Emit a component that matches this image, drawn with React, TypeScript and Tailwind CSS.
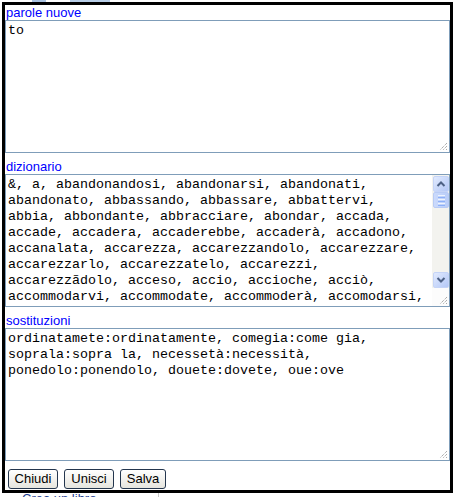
import React from "react";

const mono = { fontFamily: '"Liberation Mono", "Courier New", monospace' };

function Grip() {
  return (
    <svg
      className="absolute right-[1px] bottom-[1px]"
      width="10"
      height="10"
      viewBox="0 0 10 10"
    >
      <path d="M9 2 L2 9 M9 5 L5 9 M9 8 L8 9" stroke="#8a8a8a" strokeWidth="1" strokeDasharray="1 1" />
    </svg>
  );
}

function Label({ children }: { children: React.ReactNode }) {
  return (
    <div className="h-[15px] text-[13px] leading-[15px] text-[#0000ff] pl-[1px]" style={{ fontFamily: '"Liberation Sans", Arial, sans-serif' }}>
      {children}
    </div>
  );
}

function Lines({ lines }: { lines: string[] }) {
  return (
    <div className="text-[13.33px] leading-[16px] text-black whitespace-pre pl-[2px] pt-[2px]" style={mono}>
      {lines.map((l, i) => (
        <div key={i}>{l}</div>
      ))}
    </div>
  );
}

function ArrowBtn({ dir }: { dir: "up" | "down" }) {
  return (
    <div className="h-[16px] w-[16px] rounded-[2px] border border-[#c5d4f7] bg-gradient-to-br from-[#e1eafe] to-[#b4c8f6] flex items-center justify-center">
      <svg width="10" height="8" viewBox="0 0 10 8">
        {dir === "up" ? (
          <path d="M1.5 6 L5 2.5 L8.5 6" stroke="#4d6185" strokeWidth="2" fill="none" />
        ) : (
          <path d="M1.5 2 L5 5.5 L8.5 2" stroke="#4d6185" strokeWidth="2" fill="none" />
        )}
      </svg>
    </div>
  );
}

function Scrollbar() {
  return (
    <div className="w-[17px] flex flex-col bg-[#f3f3ef] pt-[1px] pl-[1px]">
      <ArrowBtn dir="up" />
      <div className="h-[16px] w-[16px] rounded-[2px] border border-[#b8cbf5] bg-gradient-to-r from-[#cbdafc] to-[#b9cdf8] flex flex-col items-center justify-center gap-[1px]">
        <div className="w-[7px] h-[1px] bg-[#eef4fe]" />
        <div className="w-[7px] h-[1px] bg-[#8cb0f8]" />
        <div className="w-[7px] h-[1px] bg-[#eef4fe]" />
        <div className="w-[7px] h-[1px] bg-[#8cb0f8]" />
        <div className="w-[7px] h-[1px] bg-[#eef4fe]" />
        <div className="w-[7px] h-[1px] bg-[#8cb0f8]" />
      </div>
      <div className="flex-1" />
      <ArrowBtn dir="down" />
      <div className="h-[18px] -ml-[1px] bg-[#fcfcfc]" />
    </div>
  );
}

function Button({ children, w }: { children: React.ReactNode; w: string }) {
  return (
    <button
      className={`${w} h-[20px] rounded-[3px] border border-[#24364e] bg-gradient-to-b from-[#ffffff] to-[#e6e5de] text-[13px] leading-[18px] text-black flex items-center justify-center`}
      style={{ fontFamily: '"Liberation Sans", Arial, sans-serif' }}
    >
      {children}
    </button>
  );
}

export default function App() {
  return (
    <div className="relative w-[454px] h-[497px] bg-white overflow-hidden">
      {/* background page bits */}
      <div className="absolute left-[32px] top-0 w-[14px] h-[2px] bg-[#a9c2e0]" />
      <div className="absolute left-[70px] top-0 w-[40px] h-[2px] bg-[#b7cde6]" />
      <div
        className="absolute left-[22px] top-[491px] text-[13px] leading-[15px] text-[#1f3f8f]"
        style={{ fontFamily: '"Liberation Sans", Arial, sans-serif' }}
      >
        Crea un libro
      </div>
      <div className="absolute left-[158px] top-[490px] w-[1px] h-[7px] bg-[#c8c8c8]" />

      {/* popup window */}
      <div className="absolute left-[2px] top-[2px] w-[451px] border-[3px] border-black bg-white flex flex-col pb-[1px]">
        <Label>parole nuove</Label>
        <div className="relative h-[133px] border border-[#7f9db9] bg-white">
          <Lines lines={["to"]} />
          <Grip />
        </div>
        <div className="h-[6px]" />
        <Label>dizionario</Label>
        <div className="relative h-[133px] border border-[#7f9db9] bg-white flex">
          <div className="flex-1 overflow-hidden">
            <Lines
              lines={[
                "&, a, abandonandosi, abandonarsi, abandonati,",
                "abandonato, abbassando, abbassare, abbattervi,",
                "abbia, abbondante, abbracciare, abondar, accada,",
                "accade, accadera, accaderebbe, accaderà, accadono,",
                "accanalata, accarezza, accarezzandolo, accarezzare,",
                "accarezzarlo, accarezzatelo, accarezzi,",
                "accarezzãdolo, acceso, accio, accioche, acciò,",
                "accommodarvi, accommodate, accommoderà, accomodarsi,",
              ]}
            />
          </div>
          <Scrollbar />
          <Grip />
        </div>
        <div className="h-[6px]" />
        <Label>sostituzioni</Label>
        <div className="relative h-[133px] border border-[#7f9db9] bg-white">
          <Lines
            lines={[
              "ordinatamete:ordinatamente, comegia:come gia,",
              "soprala:sopra la, necessetà:necessità,",
              "ponedolo:ponendolo, douete:dovete, oue:ove",
            ]}
          />
          <Grip />
        </div>
        <div className="flex gap-[6px] pl-[3px] pt-[8px]">
          <Button w="w-[50px]">Chiudi</Button>
          <Button w="w-[50px]">Unisci</Button>
          <Button w="w-[46px]">Salva</Button>
        </div>
      </div>
    </div>
  );
}
